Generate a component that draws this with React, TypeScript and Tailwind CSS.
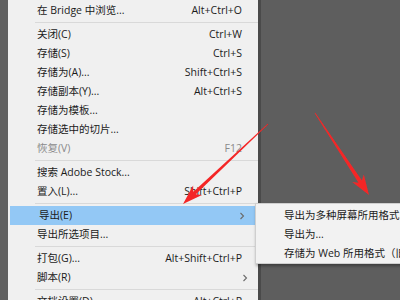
import React from "react";

type Item =
  | { type: "sep" }
  | { type: "item"; label: string; sc?: string; sub?: boolean; disabled?: boolean; active?: boolean };

const items: Item[] = [
  { type: "item", label: "在 Bridge 中浏览...", sc: "Alt+Ctrl+O" },
  { type: "sep" },
  { type: "item", label: "关闭(C)", sc: "Ctrl+W" },
  { type: "item", label: "存储(S)", sc: "Ctrl+S" },
  { type: "item", label: "存储为(A)...", sc: "Shift+Ctrl+S" },
  { type: "item", label: "存储副本(Y)...", sc: "Alt+Ctrl+S" },
  { type: "item", label: "存储为模板..." },
  { type: "item", label: "存储选中的切片..." },
  { type: "item", label: "恢复(V)", sc: "F12", disabled: true },
  { type: "sep" },
  { type: "item", label: "搜索 Adobe Stock..." },
  { type: "item", label: "置入(L)...", sc: "Shift+Ctrl+P" },
  { type: "sep" },
  { type: "item", label: "导出(E)", sub: true, active: true },
  { type: "item", label: "导出所选项目..." },
  { type: "sep" },
  { type: "item", label: "打包(G)...", sc: "Alt+Shift+Ctrl+P" },
  { type: "item", label: "脚本(R)", sub: true },
  { type: "sep" },
  { type: "item", label: "文档设置(D)...", sc: "Alt+Ctrl+P" },
];

function arrowPoints(
  tx: number, ty: number, px: number, py: number,
  w0: number, w1: number, L: number, H: number, notch: number
) {
  const dx = px - tx, dy = py - ty;
  const len = Math.hypot(dx, dy);
  const ux = dx / len, uy = dy / len;
  const nx = -uy, ny = ux;
  const bx = px - ux * L, by = py - uy * L;
  const cx = px - ux * (L - notch), cy = py - uy * (L - notch);
  const pts = [
    [tx + nx * w0 / 2, ty + ny * w0 / 2],
    [cx + nx * w1 / 2, cy + ny * w1 / 2],
    [bx + nx * H / 2, by + ny * H / 2],
    [px, py],
    [bx - nx * H / 2, by - ny * H / 2],
    [cx - nx * w1 / 2, cy - ny * w1 / 2],
    [tx - nx * w0 / 2, ty - ny * w0 / 2],
  ];
  return pts.map((p) => `${p[0].toFixed(1)},${p[1].toFixed(1)}`).join(" ");
}

const font = { fontFamily: '"Open Sans", "Noto Sans CJK SC", sans-serif' };

export default function App() {
  return (
    <div className="relative w-[400px] h-[300px] overflow-hidden bg-[#5e5e5e] text-[10.5px] leading-none" style={font}>
      <div className="flex h-full">
        <div className="w-[8px] shrink-0 bg-[#606060]" />
        <div className="w-[250px] shrink-0 bg-[#f0f0f0] pt-[1px] flex flex-col">
          {items.map((it, i) =>
            it.type === "sep" ? (
              <div key={i} className="h-[5px] shrink-0 flex items-center pl-[27px]">
                <div className="h-px w-full bg-[#d9d9d9]" />
              </div>
            ) : (
              <div
                key={i}
                className={`h-[19px] shrink-0 flex items-center pl-[29px] pr-[16px] ${
                  it.active ? "bg-[#93c8f5] ml-[2px] mr-[3px] pl-[27px] pr-[13px]" : ""
                } ${it.disabled ? "text-[#8a8a8a]" : "text-[#1b1b1b]"}`}
              >
                <span className="flex-1 whitespace-nowrap">{it.label}</span>
                {it.sc && <span className="whitespace-nowrap">{it.sc}</span>}
                {it.sub && (
                  <svg width="6" height="8" viewBox="0 0 6 8" className="-mr-[6px]">
                    <path d="M1.5 1 L4.5 4 L1.5 7" fill="none" stroke="#6b6b6b" strokeWidth="1.1" />
                  </svg>
                )}
              </div>
            )
          )}
        </div>
        <div className="w-[3px] shrink-0 bg-[#4a4a4a]" />
        <div className="flex-1 bg-[#5e5e5e]" />
      </div>

      <div className="absolute left-[255px] top-[203px] w-[170px] h-[61px] bg-[#f2f2f2] border border-[#cfcfcf] shadow-[1px_2px_3px_rgba(0,0,0,0.35)] pt-[2px] text-[#1b1b1b]">
        <div className="h-[19px] flex items-center pl-[28px] whitespace-nowrap">导出为多种屏幕所用格式...</div>
        <div className="h-[19px] flex items-center pl-[28px] whitespace-nowrap">导出为...</div>
        <div className="h-[19px] flex items-center pl-[28px] whitespace-nowrap">存储为 Web 所用格式（旧版）...</div>
      </div>

      <svg className="absolute left-0 top-0" width="400" height="300" viewBox="0 0 400 300">
        <defs>
          <filter id="soft" x="-10%" y="-10%" width="120%" height="120%">
            <feGaussianBlur stdDeviation="0.5" />
          </filter>
        </defs>
        <polygon
          points={arrowPoints(268, 124, 183, 204, 0.8, 3.6, 20, 13, 4)}
          fill="#f42828"
          filter="url(#soft)"
        />
        <polygon
          points={arrowPoints(315, 113, 369, 195, 0.8, 4, 20, 14, 4)}
          fill="#f42828"
          filter="url(#soft)"
        />
      </svg>
    </div>
  );
}
